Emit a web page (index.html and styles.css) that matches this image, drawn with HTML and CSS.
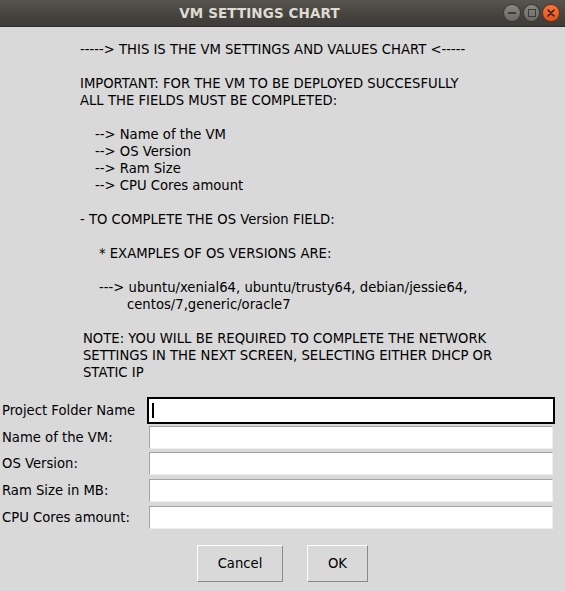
FILE: index.html
```html
<!DOCTYPE html>
<html>
<head>
<meta charset="utf-8">
<title>VM SETTINGS CHART</title>
<link rel="stylesheet" href="styles.css">
</head>
<body>
<div class="window">
  <div class="titlebar">
    <div class="title">VM SETTINGS CHART</div>
    <div class="controls">
      <span class="ctl ctl-min"><span class="glyph-min"></span></span>
      <span class="ctl ctl-max"><span class="glyph-max"></span></span>
      <span class="ctl ctl-close">
        <svg width="10" height="10" viewBox="0 0 10 10"><path d="M2 2L8 8M8 2L2 8" stroke="#3a1a0e" stroke-width="1.6" stroke-linecap="round"/></svg>
      </span>
    </div>
  </div>
  <div class="body">
    <div class="chart">
      <div class="ln i0">-----&gt; THIS IS THE VM SETTINGS AND VALUES CHART &lt;-----</div>
      <div class="ln"></div>
      <div class="ln i0">IMPORTANT: FOR THE VM TO BE DEPLOYED SUCCESFULLY</div>
      <div class="ln i0">ALL THE FIELDS MUST BE COMPLETED:</div>
      <div class="ln"></div>
      <div class="ln i1">--&gt; Name of the VM</div>
      <div class="ln i1">--&gt; OS Version</div>
      <div class="ln i1">--&gt; Ram Size</div>
      <div class="ln i1">--&gt; CPU Cores amount</div>
      <div class="ln"></div>
      <div class="ln i0">- TO COMPLETE THE OS Version FIELD:</div>
      <div class="ln"></div>
      <div class="ln i2">* EXAMPLES OF OS VERSIONS ARE:</div>
      <div class="ln"></div>
      <div class="ln i2">---&gt; ubuntu/xenial64, ubuntu/trusty64, debian/jessie64,</div>
      <div class="ln i3">centos/7,generic/oracle7</div>
      <div class="ln"></div>
      <div class="ln i4">NOTE: YOU WILL BE REQUIRED TO COMPLETE THE NETWORK</div>
      <div class="ln i4">SETTINGS IN THE NEXT SCREEN, SELECTING EITHER DHCP OR</div>
      <div class="ln i4">STATIC IP</div>
    </div>
    <div class="form">
      <label class="lbl">Project Folder Name</label>
      <div class="field focused"><div class="entry"><span class="caret"></span></div></div>
      <label class="lbl">Name of the VM:</label>
      <div class="field"><div class="entry"></div></div>
      <label class="lbl">OS Version:</label>
      <div class="field"><div class="entry"></div></div>
      <label class="lbl">Ram Size in MB:</label>
      <div class="field"><div class="entry"></div></div>
      <label class="lbl">CPU Cores amount:</label>
      <div class="field"><div class="entry"></div></div>
    </div>
    <div class="buttons">
      <button class="btn btn-cancel">Cancel</button>
      <button class="btn btn-ok">OK</button>
    </div>
  </div>
</div>
</body>
</html>
```
FILE: styles.css
```css
html, body {
  margin: 0;
  padding: 0;
  background: #d9d9d9;
}
body {
  font-family: "DejaVu Sans", sans-serif;
  font-size: 13.2px;
  color: #000;
  width: 565px;
  height: 591px;
  overflow: hidden;
}
.titlebar {
  height: 27px;
  display: flex;
  align-items: center;
  background: linear-gradient(#57544e, #45433e 60%, #3d3c38);
  border-bottom: 1px solid #2f2e2b;
  box-sizing: border-box;
}
.title {
  flex: 1;
  text-align: center;
  padding-left: 16px;
  font-weight: bold;
  font-size: 13.5px;
  color: #dfdbd2;
  letter-spacing: 0.1px;
}
.controls {
  display: flex;
  gap: 2px;
  padding-right: 5px;
  width: 57px;
}
.ctl {
  width: 18px;
  height: 18px;
  border-radius: 50%;
  box-sizing: border-box;
  display: flex;
  align-items: center;
  justify-content: center;
}
.ctl-min, .ctl-max {
  background: linear-gradient(#8a8883, #6a6864);
  border: 1px solid #3b3a36;
}
.ctl-close {
  background: linear-gradient(#f5783f, #e2531d);
  border: 1px solid #7a2d0f;
}
.glyph-min {
  width: 8px;
  height: 2px;
  background: #3c3b37;
}
.glyph-max {
  width: 6px;
  height: 6px;
  border: 1.5px solid #3c3b37;
}
.body {
  padding-top: 14px;
}
.chart {
  line-height: 17px;
}
.ln {
  height: 17px;
  white-space: pre;
}
.i0 { padding-left: 80px; }
.i1 { padding-left: 95px; }
.i2 { padding-left: 99px; }
.i3 { padding-left: 127px; }
.i4 { padding-left: 83px; }
.form {
  margin-top: 16px;
  display: grid;
  grid-template-columns: 147px 408px;
  grid-auto-rows: 26.75px;
  align-items: center;
}
.lbl {
  padding-left: 2px;
}
.field {
  height: 27px;
  box-sizing: border-box;
  border: 2px solid transparent;
}
.field.focused {
  border-color: #000;
}
.entry {
  height: 100%;
  box-sizing: border-box;
  background: #fff;
  border-top: 1px solid #a3a3a3;
  border-left: 1px solid #a3a3a3;
  border-right: 1px solid #efefef;
  border-bottom: 1px solid #efefef;
  display: flex;
  align-items: center;
  padding-left: 2px;
}
.field.focused .entry {
  border-color: #fff;
}
.caret {
  width: 2px;
  height: 15px;
  background: #000;
}
.buttons {
  margin-top: 14px;
  display: flex;
  justify-content: center;
  gap: 24px;
}
.btn {
  font-family: "DejaVu Sans", sans-serif;
  font-size: 13.2px;
  color: #000;
  background: #d9d9d9;
  height: 37px;
  border-top: 1px solid #ffffff;
  border-left: 1px solid #ffffff;
  border-right: 1px solid #8a8a8a;
  border-bottom: 1px solid #8a8a8a;
  padding: 0;
  margin: 0;
}
.btn-cancel { width: 86px; }
.btn-ok { width: 61px; }
```
